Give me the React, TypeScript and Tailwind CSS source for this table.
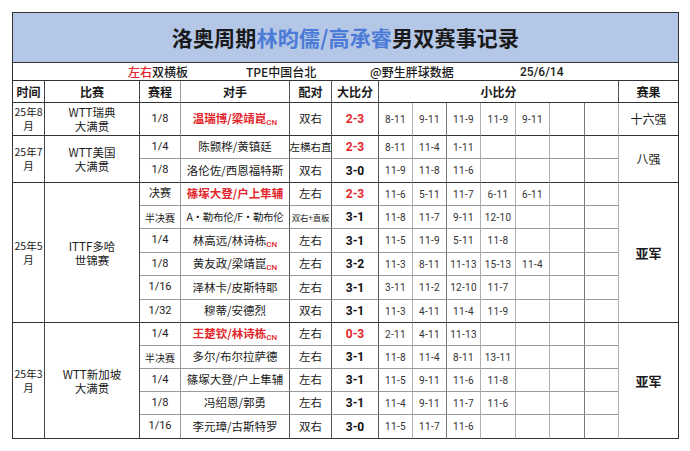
import React from "react";

type Row = {
  round: string;
  opp: string;
  oppRed?: boolean;
  oppCls?: string;
  cn?: boolean;
  pair: string;
  pairCls?: string;
  score: string;
  scoreRed?: boolean;
  games: string[];
};

type Group = {
  time: string;
  event: string;
  result: string;
  resultBold?: boolean;
  rows: Row[];
};

const groups: Group[] = [
  {
    time: "25年8月",
    event: "WTT瑞典\n大满贯",
    result: "十六强",
    rows: [
      { round: "1/8", opp: "温瑞博/梁靖崑", oppRed: true, cn: true, pair: "双右", score: "2-3", scoreRed: true, games: ["8-11", "9-11", "11-9", "11-9", "9-11"] },
    ],
  },
  {
    time: "25年7月",
    event: "WTT美国\n大满贯",
    result: "八强",
    rows: [
      { round: "1/4", opp: "陈颢桦/黄镇廷", pair: "左横右直", pairCls: "text-[10.5px]", score: "2-3", scoreRed: true, games: ["8-11", "11-4", "1-11"] },
      { round: "1/8", opp: "洛伦佐/西恩福特斯", pair: "双右", score: "3-0", games: ["11-9", "11-8", "11-6"] },
    ],
  },
  {
    time: "25年5月",
    event: "ITTF多哈\n世锦赛",
    result: "亚军",
    resultBold: true,
    rows: [
      { round: "决赛", opp: "篠塚大登/户上隼辅", oppRed: true, pair: "左右", score: "2-3", scoreRed: true, games: ["11-6", "5-11", "11-7", "6-11", "6-11"] },
      { round: "半决赛", opp: "A·勒布伦/F·勒布伦", oppCls: "text-[10.5px] tracking-[-0.3px]", pair: "双右+直板", pairCls: "text-[8.5px] tracking-[-0.2px]", score: "3-1", games: ["11-8", "11-7", "9-11", "12-10"] },
      { round: "1/4", opp: "林高远/林诗栋", cn: true, pair: "左右", score: "3-1", games: ["11-5", "11-9", "5-11", "11-8"] },
      { round: "1/8", opp: "黄友政/梁靖崑", cn: true, pair: "左右", score: "3-2", games: ["11-3", "8-11", "11-13", "15-13", "11-4"] },
      { round: "1/16", opp: "泽林卡/皮斯特耶", pair: "左右", score: "3-1", games: ["3-11", "11-2", "12-10", "11-7"] },
      { round: "1/32", opp: "穆蒂/安德烈", pair: "双右", score: "3-1", games: ["11-3", "4-11", "11-4", "11-9"] },
    ],
  },
  {
    time: "25年3月",
    event: "WTT新加坡\n大满贯",
    result: "亚军",
    resultBold: true,
    rows: [
      { round: "1/4", opp: "王楚钦/林诗栋", oppRed: true, cn: true, pair: "左右", score: "0-3", scoreRed: true, games: ["2-11", "4-11", "11-13"] },
      { round: "半决赛", opp: "多尔/布尔拉萨德", pair: "左右", score: "3-1", games: ["11-8", "11-4", "8-11", "13-11"] },
      { round: "1/4", opp: "篠塚大登/户上隼辅", pair: "左右", score: "3-1", games: ["11-5", "9-11", "11-6", "11-8"] },
      { round: "1/8", opp: "冯绍恩/郭勇", pair: "左右", score: "3-1", games: ["11-4", "9-11", "11-7", "11-6"] },
      { round: "1/16", opp: "李元璋/古斯特罗", pair: "双右", score: "3-0", games: ["11-5", "11-7", "11-6"] },
    ],
  },
];

// right border colour per column
const colR = [
  "border-r-[#444]",
  "border-r-[#444]",
  "border-r-[#9a9a9a]",
  "border-r-[#555]",
  "border-r-[#555]",
  "border-r-[#555]",
  "border-r-[#b0b0b0]",
  "border-r-[#7a7a7a]",
  "border-r-[#b0b0b0]",
  "border-r-[#b0b0b0]",
  "border-r-[#b0b0b0]",
  "border-r-[#7a7a7a]",
  "border-r-[#b0b0b0]",
  "border-r-[#333]",
];

const span: Record<number, string> = {
  1: "row-span-1",
  2: "row-span-2",
  5: "row-span-5",
  6: "row-span-6",
};

const RED = "text-[#e3262b]";
const num = "font-['Roboto','Noto_Sans_CJK_SC',sans-serif]";
const cols =
  "grid grid-cols-[32px_95px_41px_109px_42px_47px_34px_34px_34px_35px_34px_35px_34px_60px]";

const App = () => {
  const cells: React.ReactNode[] = [];

  groups.forEach((g, gi) => {
    const n = g.rows.length;
    const lastB = "border-b-[#333]";
    g.rows.forEach((r, ri) => {
      const b = ri === n - 1 ? lastB : "border-b-[#9a9a9a]";
      const base = `flex items-center justify-center border-r border-b ${b}`;
      if (ri === 0) {
        cells.push(
          <div key={`t${gi}`} className={`${span[n]} flex items-center justify-center border-r border-b ${lastB} ${colR[0]}`}>
            <p className="w-[31px] text-center text-[10.5px] leading-[14px] break-all">{g.time}</p>
          </div>
        );
        cells.push(
          <div key={`e${gi}`} className={`${span[n]} flex items-center justify-center border-r border-b ${lastB} ${colR[1]}`}>
            <p className="text-center text-[11.5px] leading-[14px] whitespace-pre-line">{g.event}</p>
          </div>
        );
      }
      cells.push(
        <div key={`r${gi}-${ri}`} className={`${base} ${colR[2]} ${r.round.length > 2 && !r.round.includes("/") ? "text-[10px]" : `${num} text-[11px]`}`}>
          {r.round}
        </div>
      );
      cells.push(
        <div key={`o${gi}-${ri}`} className={`${base} ${colR[3]} whitespace-nowrap ${r.oppCls ?? "text-[11.5px]"}`}>
          <span className={r.oppRed ? `${RED} font-bold` : ""}>{r.opp}</span>
          {r.cn && (
            <span className={`${RED} ${num} text-[8px] font-medium translate-y-[4px]`}>CN</span>
          )}
        </div>
      );
      cells.push(
        <div key={`p${gi}-${ri}`} className={`${base} ${colR[4]} whitespace-nowrap ${r.pairCls ?? "text-[11.5px]"}`}>
          {r.pair}
        </div>
      );
      cells.push(
        <div key={`s${gi}-${ri}`} className={`${base} ${colR[5]} ${num} text-[12px] font-bold ${r.scoreRed ? RED : "text-[#111]"}`}>
          {r.score}
        </div>
      );
      for (let k = 0; k < 7; k++) {
        cells.push(
          <div key={`g${gi}-${ri}-${k}`} className={`${base} ${colR[6 + k]} ${num} text-[10px] tracking-[0.3px] text-[#333]`}>
            {r.games[k] ?? ""}
          </div>
        );
      }
      if (ri === 0) {
        cells.push(
          <div key={`res${gi}`} className={`${span[n]} flex items-center justify-center border-r border-b ${lastB} ${colR[13]} ${g.resultBold ? "text-[13px] font-bold" : "text-[12px]"}`}>
            {g.result}
          </div>
        );
      }
    });
  });

  return (
    <div className="min-h-[451px] w-[690px] bg-white pt-[12px] pl-[12px] text-[#1a1a1a] font-['Noto_Sans_CJK_SC',sans-serif]">
      <div className="w-[667px] border-l border-t border-l-[#333] border-t-[#333]">
        {/* title */}
        <div className="flex h-[50px] items-center justify-center border-r border-b border-[#333] bg-[#b5c7e7] text-[21px] font-bold tracking-[0.2px]">
          <span>洛奥周期</span>
          <span className="text-[#4b7bd6]">林昀儒/高承睿</span>
          <span>男双赛事记录</span>
        </div>
        {/* info row */}
        <div className="flex h-[18px] items-center border-r border-b border-[#333] text-[12px] font-medium whitespace-nowrap">
          <div className="w-[115px]" />
          <div className="w-[118px]">
            <span className={RED}>左右</span>双横板
          </div>
          <div className="w-[124px]">TPE中国台北</div>
          <div className="w-[150px]">@野生胖球数据</div>
          <div className={num}>25/6/14</div>
        </div>
        {/* header */}
        <div className={`${cols} h-[22px] text-[12px] font-bold`}>
          <div className={`flex items-center justify-center border-r border-b border-b-[#333] ${colR[0]}`}>时间</div>
          <div className={`flex items-center justify-center border-r border-b border-b-[#333] ${colR[1]}`}>比赛</div>
          <div className={`flex items-center justify-center border-r border-b border-b-[#333] ${colR[2]}`}>赛程</div>
          <div className={`flex items-center justify-center border-r border-b border-b-[#333] ${colR[3]}`}>对手</div>
          <div className={`flex items-center justify-center border-r border-b border-b-[#333] ${colR[4]}`}>配对</div>
          <div className={`flex items-center justify-center border-r border-b border-b-[#333] ${colR[5]}`}>大比分</div>
          <div className="col-span-7 flex items-center justify-center border-r border-b border-b-[#333] border-r-[#555]">小比分</div>
          <div className={`flex items-center justify-center border-r border-b border-b-[#333] ${colR[13]}`}>赛果</div>
        </div>
        {/* body */}
        <div className={`${cols} grid-rows-[33px_23px_24px_23px_23px_24px_23px_24px_23px_23px_23px_23px_23px_24px]`}>
          {cells}
        </div>
      </div>
    </div>
  );
};

export default App;
